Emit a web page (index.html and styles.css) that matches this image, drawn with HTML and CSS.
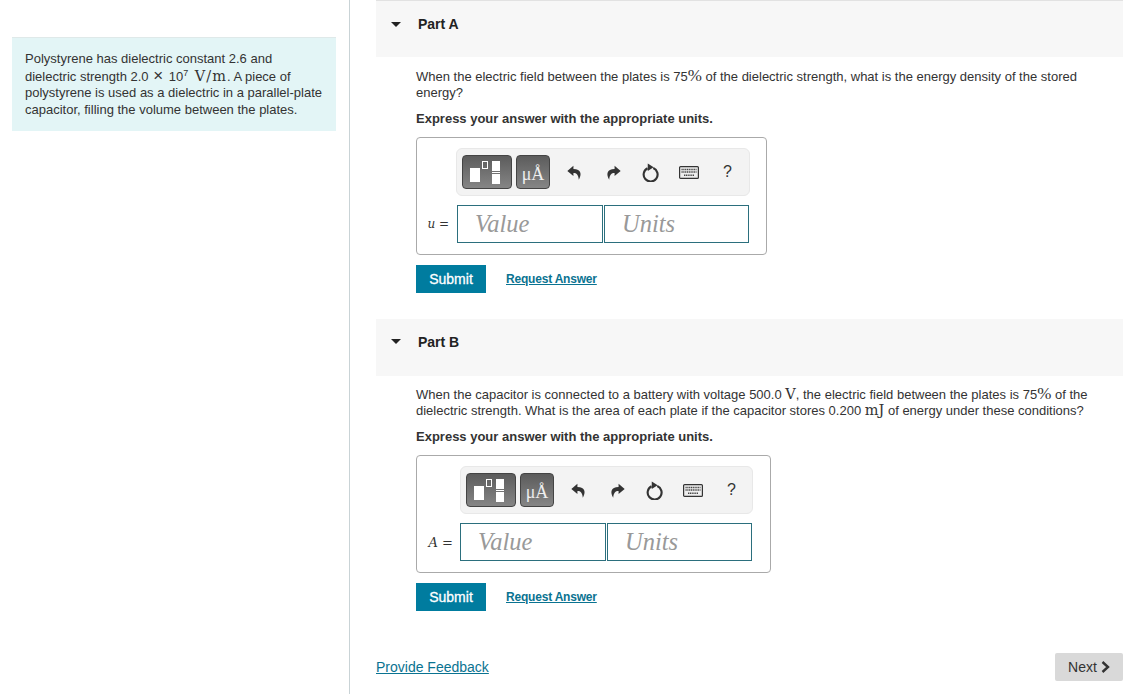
FILE: index.html
```html
<!DOCTYPE html>
<html lang="en">
<head>
    <meta charset="UTF-8">
    <title>Capacitor Parts</title>
    <link rel="stylesheet" href="styles.css">
</head>
<body>
    <svg class="icon-defs" width="0" height="0">
        <symbol id="i-undo" viewBox="0 0 14 14"><path d="M6 0.6 L0.3 5.6 L6 10.2 V7.4 C9 7.4 10.6 9 11 13.8 C14 9 13.4 3.8 6 3.8 Z"/></symbol>
        <symbol id="i-redo" viewBox="0 0 14 14"><path d="M8 0.6 L13.7 5.6 L8 10.2 V7.4 C5 7.4 3.4 9 3 13.8 C0 9 0.6 3.8 8 3.8 Z"/></symbol>
        <symbol id="i-reset" viewBox="0 0 16 18"><path class="ring" d="M5.2 5 A6.6 6.6 0 1 0 10.6 4.8"/><path d="M5.4 0.4 L11 4 L5.4 7.6 Z"/></symbol>
        <symbol id="i-keys" viewBox="0 0 20 13"><rect class="key-case" x="0.6" y="0.6" width="18.8" height="11.8" rx="1"/><path class="key-row" d="M2.5 3.5 H17.5 M2.5 6 H17.5 M5 9.2 H15"/></symbol>
    </svg>

    <div class="page">
        <aside class="intro-col">
            <div class="intro">
                Polystyrene has dielectric constant 2.6 and dielectric strength 2.0 <span class="times">×</span> 10<sup>7</sup> <span class="math">V/m</span>. A piece of polystyrene is used as a dielectric in a parallel-plate capacitor, filling the volume between the plates.
            </div>
        </aside>

        <main class="parts">
            <section class="part part-a">
                <header class="part-head"><span class="caret"></span><h2>Part A</h2></header>
                <div class="part-body">
                    <p class="question">When the electric field between the plates is 75<span class="pct">%</span> of the dielectric strength, what is the energy density of the stored energy?</p>
                    <p class="hint">Express your answer with the appropriate units.</p>
                    <div class="answer-box box-a">
                        <div class="toolbar">
                            <button class="tool tool-frac"><span class="sq-big"></span><span class="sq-small"></span><span class="frac"><i></i><b></b><i></i></span></button>
                            <button class="tool tool-unit">μÅ</button>
                            <svg class="ico ico-undo"><use href="#i-undo"/></svg>
                            <svg class="ico ico-redo"><use href="#i-redo"/></svg>
                            <svg class="ico ico-reset"><use href="#i-reset"/></svg>
                            <svg class="ico ico-keys"><use href="#i-keys"/></svg>
                            <span class="help">?</span>
                        </div>
                        <div class="answer-row">
                            <span class="var small">u =</span>
                            <input class="field" placeholder="Value">
                            <input class="field" placeholder="Units">
                        </div>
                    </div>
                    <div class="actions">
                        <button class="submit">Submit</button>
                        <a class="request" href="#">Request Answer</a>
                    </div>
                </div>
            </section>

            <section class="part part-b">
                <header class="part-head"><span class="caret"></span><h2>Part B</h2></header>
                <div class="part-body">
                    <p class="question">When the capacitor is connected to a battery with voltage 500.0 <span class="math">V</span>, the electric field between the plates is 75<span class="pct">%</span> of the dielectric strength. What is the area of each plate if the capacitor stores 0.200 <span class="math">mJ</span> of energy under these conditions?</p>
                    <p class="hint">Express your answer with the appropriate units.</p>
                    <div class="answer-box box-b">
                        <div class="toolbar">
                            <button class="tool tool-frac"><span class="sq-big"></span><span class="sq-small"></span><span class="frac"><i></i><b></b><i></i></span></button>
                            <button class="tool tool-unit">μÅ</button>
                            <svg class="ico ico-undo"><use href="#i-undo"/></svg>
                            <svg class="ico ico-redo"><use href="#i-redo"/></svg>
                            <svg class="ico ico-reset"><use href="#i-reset"/></svg>
                            <svg class="ico ico-keys"><use href="#i-keys"/></svg>
                            <span class="help">?</span>
                        </div>
                        <div class="answer-row">
                            <span class="var">A =</span>
                            <input class="field" placeholder="Value">
                            <input class="field" placeholder="Units">
                        </div>
                    </div>
                    <div class="actions">
                        <button class="submit">Submit</button>
                        <a class="request" href="#">Request Answer</a>
                    </div>
                </div>
            </section>

            <footer class="foot">
                <a class="feedback" href="#">Provide Feedback</a>
                <button class="next">Next <svg class="next-arrow" viewBox="0 0 9 12"><path d="M1.5 1 L7 6 L1.5 11"/></svg></button>
            </footer>
        </main>
    </div>
</body>
</html>
```

FILE: styles.css
```css
html, body {
    margin: 0;
    height: 694px;
    overflow: hidden;
}

body {
    font-family: "Liberation Sans", Arial, sans-serif;
    font-size: 13px;
    color: #333;
    background-color: white;
}

.icon-defs {
    position: absolute;
}

.page {
    display: flex;
    height: 694px;
}

.intro-col {
    width: 349px;
    box-sizing: border-box;
    flex: none;
    padding: 37px 13px 0 12px;
    box-shadow: 1px 0 0 #c9d3d6;
}

.intro {
    background-color: #e3f5f6;
    border-top: 1px solid #dfe9e9;
    padding: 13px 12px 12px 13px;
    height: 68px;
    line-height: 16.5px;
}

.intro sup {
    font-size: 9px;
    line-height: 8px;
}

.intro .math {
    margin-left: 3px;
    letter-spacing: 1px;
}

.times {
    font-size: 17px;
    margin: 0 2px 0 1px;
}

.math {
    font-family: "DejaVu Serif", "Liberation Serif", serif;
    font-size: 14.5px;
}

.pct {
    font-family: "Liberation Serif", serif;
    font-size: 17px;
}

.parts {
    margin-left: 27px;
    width: 747px;
    flex: none;
}

.part {
    height: 319px;
}

.part-head {
    display: flex;
    align-items: flex-start;
    height: 56px;
    background-color: #f7f7f7;
    border-top: 1px solid #e2e2e2;
}

.part-b .part-head {
    border-top-color: #f7f7f7;
}

.caret {
    width: 0;
    height: 0;
    margin: 21px 0 0 15px;
    border-left: 5px solid transparent;
    border-right: 5px solid transparent;
    border-top: 5px solid #222;
}

.part-b .caret {
    margin-top: 19px;
}

.part-head h2 {
    margin: 14px 0 0 17px;
    font-size: 14px;
    line-height: 18px;
    color: #222;
}

.part-b h2 {
    margin-top: 13px;
}

.part-body {
    padding: 11px 0 0 40px;
}

.part-a .part-body {
    padding-top: 12px;
}

.question {
    margin: 0;
    height: 33px;
    line-height: 16px;
    width: 690px;
}

.question .math, .question .pct {
    line-height: 0;
}

.hint {
    margin: 8px 0 0;
    line-height: 18px;
    font-weight: bold;
    font-size: 13px;
}

.answer-box {
    margin-top: 9px;
    box-sizing: border-box;
    width: 351px;
    height: 118px;
    border: 1px solid #aaa;
    border-radius: 4px;
    padding-top: 10px;
}

.box-b {
    width: 355px;
}

.toolbar {
    display: flex;
    align-items: center;
    box-sizing: border-box;
    height: 48px;
    margin: 0 16px 0 39px;
    padding-left: 5px;
    background-color: #f3f3f3;
    border: 1px solid #e8e8e8;
    border-radius: 6px;
}

.tool {
    height: 34px;
    padding: 0;
    border: 1px solid #444;
    border-radius: 4px;
    background: linear-gradient(#5c5c5c, #858585);
    color: #eee;
}

.tool-frac {
    width: 50px;
    display: flex;
    align-items: center;
}

.sq-big {
    width: 10px;
    height: 14px;
    margin: 6px 0 0 7px;
    background-color: white;
}

.sq-small {
    box-sizing: border-box;
    width: 6px;
    height: 8px;
    margin: -15px 0 0 2px;
    border: 1px solid white;
}

.frac {
    display: flex;
    flex-direction: column;
    margin-left: 4px;
    gap: 1px;
}

.frac i {
    width: 8px;
    height: 10px;
    background-color: white;
}

.frac b {
    width: 8px;
    height: 1px;
    background-color: white;
}

.tool-unit {
    width: 34px;
    margin-left: 4px;
    padding-top: 3px;
    font-family: "Liberation Serif", serif;
    font-size: 18px;
    line-height: 1;
}

.ico {
    flex: none;
    fill: #333;
}

.ico-undo, .ico-redo {
    width: 15px;
    height: 15px;
}

.ico-undo {
    margin-left: 17px;
}

.ico-redo {
    margin-left: 24px;
}

.ico-reset {
    width: 17px;
    height: 19px;
    margin-left: 21px;
}

.ring {
    fill: none;
    stroke: #333;
    stroke-width: 2;
}

.ico-keys {
    width: 20px;
    height: 13px;
    margin-left: 20px;
}

.key-case {
    fill: #eee;
    stroke: #333;
    stroke-width: 1.2;
}

.key-row {
    fill: none;
    stroke: #444;
    stroke-width: 1.4;
    stroke-dasharray: 1.2 0.6;
}

.help {
    margin-left: 24px;
    font-size: 16px;
    color: #333;
}

.answer-row {
    display: flex;
    align-items: center;
    margin-top: 9px;
}

.var {
    width: 40px;
    flex: none;
    box-sizing: border-box;
    padding-right: 8px;
    text-align: right;
    font-family: "DejaVu Serif", serif;
    font-style: italic;
    font-size: 13px;
}

.var.small {
    font-size: 12px;
}

.box-b .var {
    width: 43px;
    padding-right: 7px;
}

.box-b .toolbar {
    margin: 0 17px 0 43px;
}

.field {
    flex: none;
    box-sizing: border-box;
    width: 146px;
    height: 38px;
    margin-right: 1px;
    padding: 0 0 0 17px;
    border: 1px solid #2b6f7d;
    border-radius: 0;
    font-family: "Liberation Serif", serif;
    font-style: italic;
    font-size: 24.5px;
    background-color: white;
}

.field:last-child {
    width: 145px;
}

.field::placeholder {
    color: #999;
    opacity: 1;
}

.actions {
    display: flex;
    align-items: center;
    margin-top: 10px;
}

.submit {
    width: 70px;
    height: 28px;
    padding: 0;
    border: 0;
    background-color: #007c9f;
    color: white;
    font-family: "Liberation Sans", Arial, sans-serif;
    font-size: 14px;
    -webkit-text-stroke: 0.3px white;
}

.request {
    margin-left: 20px;
    padding-bottom: 1px;
    font-size: 12px;
    letter-spacing: -0.2px;
    font-weight: bold;
    color: #0a7391;
}

.foot {
    display: flex;
    justify-content: space-between;
    align-items: center;
    margin-top: 15px;
}

.feedback {
    font-size: 14px;
    color: #0a7391;
}

.next {
    display: flex;
    align-items: center;
    justify-content: center;
    gap: 4px;
    width: 68px;
    height: 28px;
    padding: 0;
    border: 0;
    border-radius: 2px;
    background-color: #d9d9d9;
    color: #333;
    font-family: "Liberation Sans", Arial, sans-serif;
    font-size: 14px;
}

.next-arrow {
    width: 9px;
    height: 12px;
    fill: none;
    stroke: #333;
    stroke-width: 2.4;
}
```
